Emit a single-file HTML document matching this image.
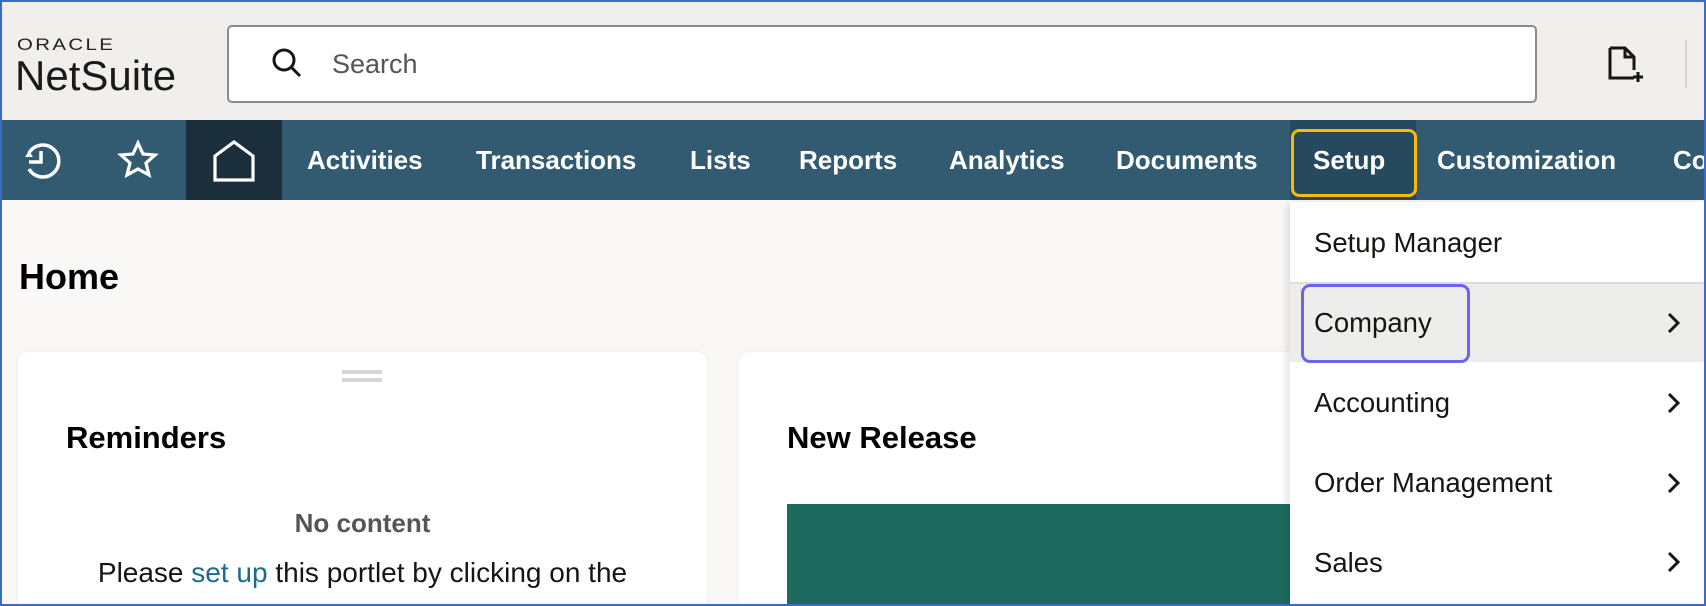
<!DOCTYPE html>
<html style="overflow:hidden"><head><meta charset="utf-8"><style>
*{margin:0;padding:0;box-sizing:border-box}
html,body{width:1706px;height:606px;overflow:hidden}
body{background:#f9f8f7;font-family:"Liberation Sans",sans-serif;position:relative}
.a{position:absolute}
.frame{position:absolute;left:0;top:0;width:1706px;height:606px;border:2px solid #3a6bc6;pointer-events:none;z-index:50}
.hdr{left:0;top:0;width:1706px;height:120px;background:#f0efee}
.nav{left:0;top:120px;width:1706px;height:80px;background:#325b72}
.ni{position:absolute;top:120px;height:80px;line-height:80px;color:#fff;font-size:26px;font-weight:bold;white-space:nowrap}
.dd{left:1290px;top:202px;width:416px;height:404px;background:#fff;box-shadow:-3px 2px 8px rgba(0,0,0,.12)}
.row{position:absolute;left:1314px;font-size:27.5px;color:#161513;line-height:30px}
.chev{position:absolute;left:1664px}
.card{background:#fff;border-radius:10px;box-shadow:0 0 4px rgba(0,0,0,.06)}
</style></head><body>
<div class="a hdr"></div>
<div class="a" style="left:17px;top:35px;font-size:17px;letter-spacing:2px;color:#222;transform:scaleX(1.2);transform-origin:left">ORACLE</div>
<div class="a" style="left:15px;top:52px;font-size:42px;color:#1a1a1a;transform:scaleX(1.0)">NetSuite</div>
<div class="a" style="left:227px;top:25px;width:1310px;height:78px;background:#fff;border:2px solid #8a8a8a;border-radius:5px"></div>
<svg class="a" style="left:270px;top:46px" width="36" height="36" viewBox="0 0 36 36"><circle cx="14" cy="14" r="10" fill="none" stroke="#161513" stroke-width="3"/><path d="M21 21l9 9" stroke="#161513" stroke-width="3"/></svg>
<div class="a" style="left:332px;top:49px;font-size:27px;color:#555">Search</div>
<svg class="a" style="left:1604px;top:44px" width="40" height="40" viewBox="0 0 40 40"><path d="M6 4h15l9 9v13M30 34H6V4M21 4v9h9" fill="none" stroke="#161513" stroke-width="3"/><path d="M34 28v10M29 33h10" stroke="#161513" stroke-width="3"/></svg>
<div class="a" style="left:1685px;top:40px;width:2px;height:48px;background:#d4d2cf"></div>
<div class="a nav"></div>
<div class="a" style="left:186px;top:120px;width:96px;height:80px;background:#1b2e3c"></div>
<svg class="a" style="left:20px;top:140px" width="42" height="42" viewBox="0 0 42 42"><path d="M9 13A16 16 0 1 1 9 29" fill="none" stroke="#fff" stroke-width="3.5"/><path d="M21 11v11h-12" fill="none" stroke="#fff" stroke-width="3.5"/><path d="M5 17l4 -6 4 6z" fill="#fff"/></svg>
<svg class="a" style="left:117px;top:139px" width="42" height="42" viewBox="0 0 42 42"><path d="M21 4l5 11 12 1-9 8 3 12-11-6-11 6 3-12-9-8 12-1z" fill="none" stroke="#fff" stroke-width="3.2" stroke-linejoin="miter"/></svg>
<svg class="a" style="left:212px;top:139px" width="44" height="44" viewBox="0 0 44 44"><path d="M3 41V17L22 3l19 14v24z" fill="none" stroke="#fff" stroke-width="3.2"/></svg>
<div class="ni" style="left:307px">Activities</div>
<div class="ni" style="left:476px">Transactions</div>
<div class="ni" style="left:690px">Lists</div>
<div class="ni" style="left:799px">Reports</div>
<div class="ni" style="left:949px">Analytics</div>
<div class="ni" style="left:1116px">Documents</div>
<div class="a" style="left:1290px;top:120px;width:126px;height:80px;background:#27495e"></div>
<div class="a" style="left:1291px;top:129px;width:126px;height:68px;border:3px solid #f9b90a;border-radius:8px"></div>
<div class="ni" style="left:1313px">Setup</div>
<div class="ni" style="left:1437px">Customization</div>
<div class="ni" style="left:1673px">Co</div>
<div class="a" style="left:19px;top:256px;font-size:36px;font-weight:bold;color:#000">Home</div>
<div class="a card" style="left:18px;top:352px;width:689px;height:270px"></div>
<div class="a" style="left:342px;top:370px;width:40px;height:4px;background:#d6d6d6"></div>
<div class="a" style="left:342px;top:378px;width:40px;height:4px;background:#d6d6d6"></div>
<div class="a" style="left:66px;top:420px;font-size:31px;font-weight:bold;color:#000">Reminders</div>
<div class="a" style="left:18px;top:508px;width:689px;text-align:center;font-size:26px;font-weight:bold;color:#555">No content</div>
<div class="a" style="left:18px;top:557px;width:689px;text-align:center;font-size:28px;color:#161513">Please <span style="color:#1b6b8c">set up</span> this portlet by clicking on the</div>
<div class="a card" style="left:739px;top:352px;width:700px;height:270px"></div>
<div class="a" style="left:787px;top:420px;font-size:31px;font-weight:bold;color:#000">New Release</div>
<div class="a" style="left:787px;top:504px;width:560px;height:102px;background:#1d6b5f"></div>
<div class="a dd"></div>
<div class="a" style="left:1290px;top:282px;width:416px;height:2px;background:#dcdcdc"></div>
<div class="a" style="left:1290px;top:284px;width:416px;height:78px;background:#ededec"></div>
<div class="a" style="left:1301px;top:284px;width:169px;height:79px;border:3px solid #6b63f2;border-radius:9px"></div>
<div class="row" style="top:228px">Setup Manager</div>
<div class="row" style="top:308px">Company</div>
<div class="row" style="top:388px">Accounting</div>
<div class="row" style="top:468px">Order Management</div>
<div class="row" style="top:548px">Sales</div>
<svg class="chev" style="top:311px" width="20" height="24" viewBox="0 0 20 24"><path d="M5 3l9 9-9 9" fill="none" stroke="#161513" stroke-width="3"/></svg>
<svg class="chev" style="top:391px" width="20" height="24" viewBox="0 0 20 24"><path d="M5 3l9 9-9 9" fill="none" stroke="#161513" stroke-width="3"/></svg>
<svg class="chev" style="top:471px" width="20" height="24" viewBox="0 0 20 24"><path d="M5 3l9 9-9 9" fill="none" stroke="#161513" stroke-width="3"/></svg>
<svg class="chev" style="top:550px" width="20" height="24" viewBox="0 0 20 24"><path d="M5 3l9 9-9 9" fill="none" stroke="#161513" stroke-width="3"/></svg>
<div class="frame"></div>
</body></html>
